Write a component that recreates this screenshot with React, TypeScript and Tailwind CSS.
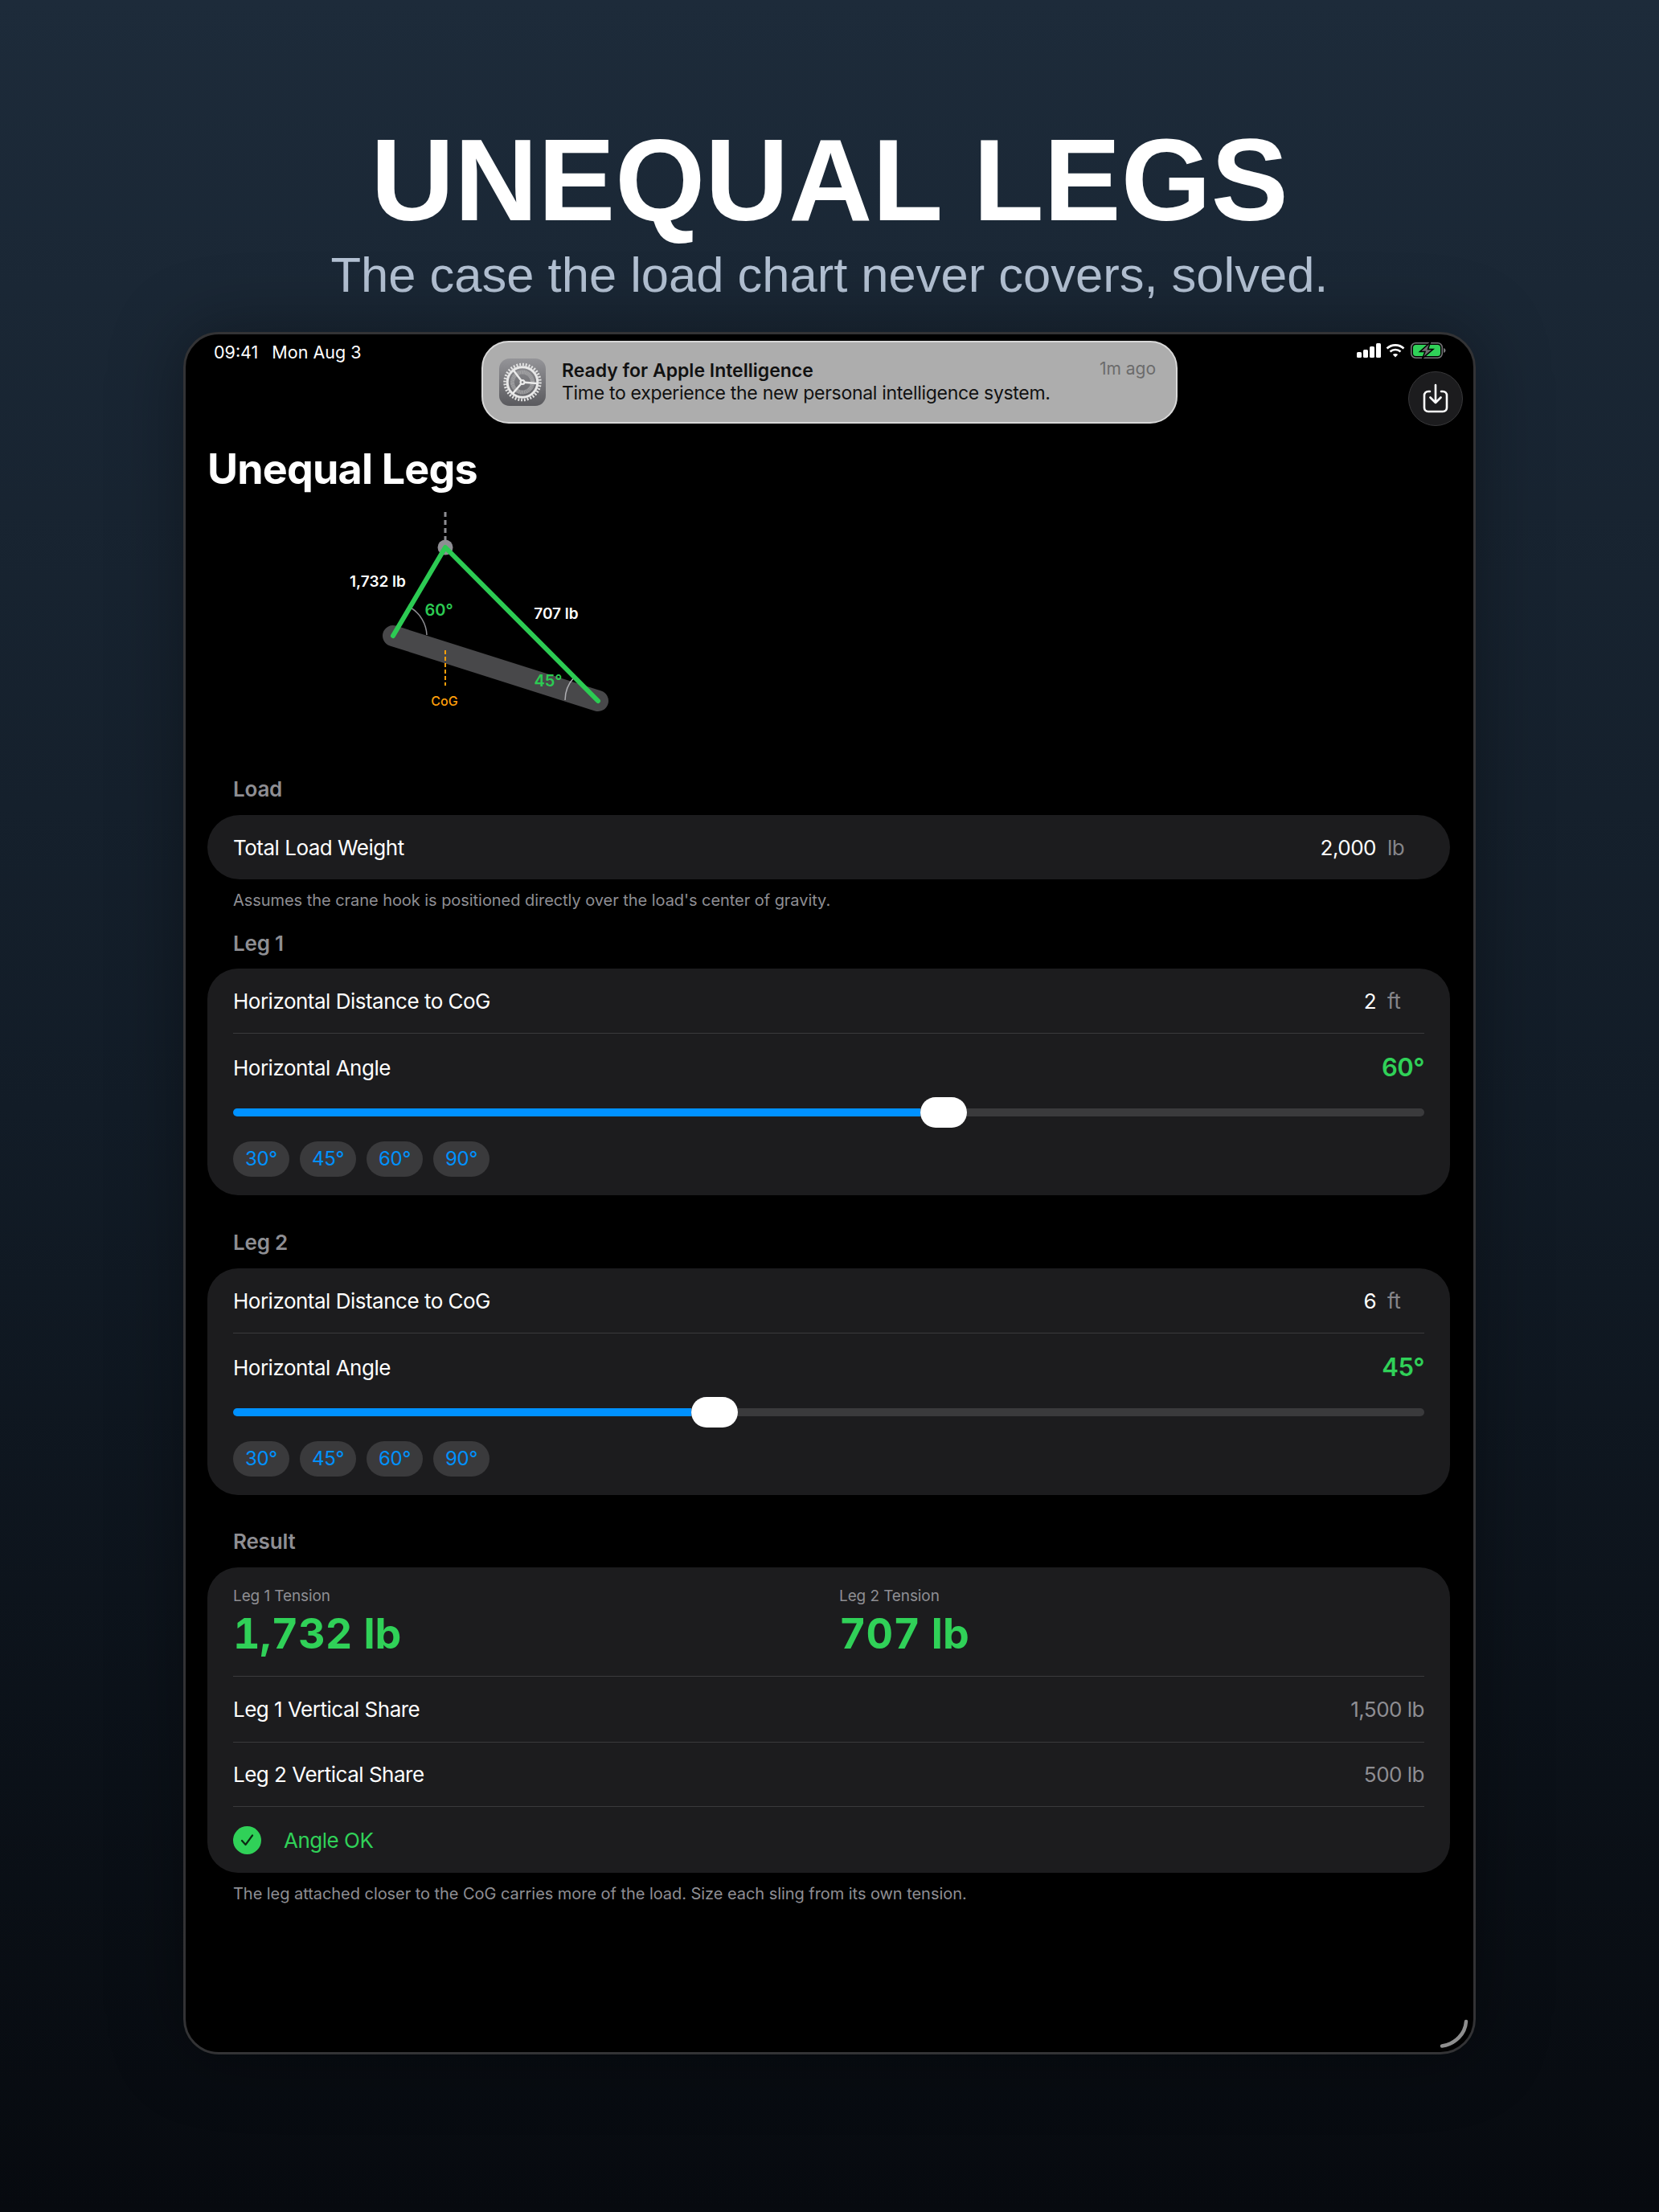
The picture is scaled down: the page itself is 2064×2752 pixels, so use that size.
const FONT = "font-['Inter',sans-serif]";

function SectionLabel({ children, className }: { children: string; className: string }) {
  return (
    <div className={`h-[34px] pl-[32px] text-[26px] leading-[36px] font-semibold tracking-[-0.2px] text-[#8e8e93] ${className}`}>
      {children}
    </div>
  );
}

function InputRow({ label, value, unit }: { label: string; value: string; unit: string }) {
  return (
    <div className="flex h-[80px] items-center text-[26px] tracking-[-0.5px] text-white">
      <span className="flex-1">{label}</span>
      <span>{value}</span>
      <span className="ml-[14px] w-[46px] text-[#858589]">{unit}</span>
    </div>
  );
}

function AngleChips() {
  return (
    <div className="mt-[17px] flex gap-[13px]">
      {["30°", "45°", "60°", "90°"].map((a) => (
        <div
          key={a}
          className="flex h-[44px] w-[70px] items-center justify-center rounded-[22px] bg-[#3a3a3c] text-[24px] tracking-[-0.3px] text-[#0091ff]"
        >
          {a}
        </div>
      ))}
    </div>
  );
}

function LegCard({ distance, angle, fill }: { distance: string; angle: string; fill: string }) {
  return (
    <div className="h-[282px] rounded-[38px] bg-[#1c1c1e] px-[32px]">
      <div className="border-b border-[#3a3a3c]">
        <InputRow label="Horizontal Distance to CoG" value={distance} unit="ft" />
      </div>
      <div className="mt-[22px] flex h-[40px] items-center justify-between text-[26px] tracking-[-0.5px] text-white">
        <span>Horizontal Angle</span>
        <span className="text-[31px] font-semibold text-[#30d158]">{angle}</span>
      </div>
      <div className="mt-[17px] flex h-[38px] items-center">
        <div className={`h-[10px] rounded-l-full bg-[#0091ff] ${fill}`} />
        <div className="h-[38px] w-[58px] rounded-[19px] bg-white" />
        <div className="h-[10px] flex-1 rounded-r-full bg-[#3a3a3c]" />
      </div>
      <AngleChips />
    </div>
  );
}

function ShareRow({ label, value, height }: { label: string; value: string; height: string }) {
  return (
    <div className={`flex items-center justify-between border-b border-[#3a3a3c] text-[26px] tracking-[-0.5px] text-white ${height}`}>
      <span>{label}</span>
      <span className="text-[#8e8e93]">{value}</span>
    </div>
  );
}

function Tension({ label, value, className }: { label: string; value: string; className: string }) {
  return (
    <div className={className}>
      <div className="text-[19px] leading-[24px] tracking-[-0.1px] text-[#8e8e93]">{label}</div>
      <div className="mt-[2px] text-[52px] leading-[66px] font-bold text-[#30d158] tabular-nums">{value}</div>
    </div>
  );
}

function SettingsIcon() {
  return (
    <svg width="58" height="59" viewBox="0 0 58 59" className="shrink-0">
      <defs>
        <linearGradient id="gearBg" x1="0" y1="0" x2="0" y2="1">
          <stop offset="0" stopColor="#949498" />
          <stop offset="1" stopColor="#5a5a5e" />
        </linearGradient>
      </defs>
      <rect width="58" height="59" rx="13" fill="url(#gearBg)" />
      <circle cx="29" cy="29.5" r="22" fill="none" stroke="#e4e4e4" strokeWidth="3.500" pathLength="72" strokeDasharray="1 1" />
      <circle cx="29" cy="29.5" r="18.800" fill="none" stroke="#e8e8e8" strokeWidth="3" />
      <circle cx="29" cy="29.5" r="12.500" fill="none" stroke="#a2a2a4" strokeWidth="5" pathLength="96" strokeDasharray="1.500 0.500" />
      <path d="M29 29.500L47 31M29 29.500L18 15M29 29.500L17 43.500" stroke="#ececec" strokeWidth="2.500" fill="none" />
      <circle cx="29" cy="29.5" r="3.500" fill="#ececec" />
      <circle cx="29" cy="29.5" r="1.300" fill="#77777b" />
    </svg>
  );
}

function StatusIcons() {
  return (
    <div className="flex items-center">
      <svg width="30" height="18" viewBox="0 0 30 18" fill="#fff">
        <rect x="0" y="11" width="6" height="7" rx="1.5" />
        <rect x="8" y="8" width="6" height="10" rx="1.5" />
        <rect x="16" y="4" width="6" height="14" rx="1.5" />
        <rect x="24" y="0" width="6" height="18" rx="1.5" />
      </svg>
      <svg width="24" height="18" viewBox="0 0 24 18" fill="none" stroke="#fff" strokeWidth="2.6" className="ml-[6px]">
        <path d="M1.5 6.5C7.5 1 16.5 1 22.5 6.5" />
        <path d="M5.5 10.5C9.2 7.2 14.8 7.2 18.5 10.5" />
        <path d="M12 17.5L8.8 14C10.6 12.6 13.4 12.6 15.2 14Z" fill="#fff" stroke="none" />
      </svg>
      <svg width="44" height="20" viewBox="0 0 44 20" className="ml-[7px]">
        <rect x="0.75" y="0.75" width="38.5" height="18.5" rx="5.5" fill="none" stroke="#77777a" strokeWidth="1.5" />
        <rect x="3" y="3" width="34" height="14" rx="3.5" fill="#30d158" />
        <path d="M41 7C42.5 7.5 43.5 8.6 43.5 10C43.5 11.4 42.5 12.5 41 13Z" fill="#77777a" />
        <path d="M24.500 0L11.500 11.500H18L14.500 20L28 8.500H21.500Z" fill="#6e6e70" stroke="#000" strokeWidth="1.500" />
      </svg>
    </div>
  );
}

function SlingDiagram() {
  return (
    <svg width="600" height="340" viewBox="258 623 600 340" className="block">
      <line x1="554" y1="636" x2="554" y2="680" stroke="#8e8e93" strokeWidth="3" strokeDasharray="6 4" />
      <line x1="489" y1="790" x2="744" y2="871" stroke="#48484a" strokeWidth="26" strokeLinecap="round" />
      <circle cx="554" cy="680" r="9.5" fill="#8e8e93" />
      <line x1="554" y1="808" x2="554" y2="852" stroke="#ff9f0a" strokeWidth="2" strokeDasharray="5 3" />
      <path d="M511 755A42 42 0 0 1 531 789" fill="none" stroke="#8e8e93" strokeWidth="1.5" />
      <path d="M714 842A42 42 0 0 0 703 870" fill="none" stroke="#aeaeb2" strokeWidth="1.5" />
      <path d="M489 790L554 680L744 871" fill="none" stroke="#2ccb53" strokeWidth="6" strokeLinecap="round" strokeLinejoin="round" />
      <text x="553" y="877" textAnchor="middle" fontSize="16" fontWeight="500" fill="#ff9f0a">CoG</text>
      <text x="470" y="729" textAnchor="middle" fontSize="19" fontWeight="600" fill="#fff">1,732 lb</text>
      <text x="692" y="769" textAnchor="middle" fontSize="19" fontWeight="600" fill="#fff">707 lb</text>
      <text x="546" y="765" textAnchor="middle" fontSize="20" fontWeight="600" fill="#2ccb53">60°</text>
      <text x="682" y="853" textAnchor="middle" fontSize="20" fontWeight="600" fill="#2ccb53">45°</text>
    </svg>
  );
}

export default function App() {
  return (
    <div className="flex h-[2752px] w-[2064px] flex-col items-center bg-gradient-to-b from-[#1d2b3a] via-[#121c27] to-[#070a0f]">
      {/* Headline */}
      <h1 className="mt-[152px] font-['Liberation_Sans',sans-serif] text-[144px] leading-[146px] font-bold text-white">
        UNEQUAL LEGS
      </h1>
      <p className="mt-[7px] font-['Liberation_Sans',sans-serif] text-[61.500px] leading-[74px] text-[#b3c1d3]">
        The case the load chart never covers, solved.
      </p>

      {/* iPad frame */}
      <div
        className={`relative mt-[34px] h-[2143px] w-[1608px] rounded-[44px] border-[3px] border-[#333335] bg-black pl-[27px] shadow-[0_0_90px_rgba(0,0,0,0.35)] ${FONT}`}
      >
        <div className="flex h-[128px] w-[1546px] items-start justify-between">
          <div className="mt-[8px] ml-[8px] flex gap-[17px] text-[21.500px] leading-[28px] text-white">
            <span>09:41</span>
            <span>Mon Aug 3</span>
          </div>
          <div className="mt-[10px] mr-[5px]">
            <StatusIcons />
          </div>
        </div>

        {/* Notification banner */}
        <div className="absolute top-[8px] left-[368px] flex h-[103px] w-[866px] items-start rounded-[34px] border-2 border-[#d8d8d8] bg-[#adadad] pt-[20px] pr-[25px] pl-[20px]">
          <SettingsIcon />
          <div className="mt-[1px] ml-[20px] flex-1 text-[23px] leading-[28px] text-[#111]">
            <div className="font-semibold">Ready for Apple Intelligence</div>
            <div className="tracking-[-0.3px]">Time to experience the new personal intelligence system.</div>
          </div>
          <span className="-mt-[1px] text-[21px] leading-[28px] text-[#6b6b6b]">1m ago</span>
        </div>

        {/* Export button */}
        <button className="absolute top-[46px] left-[1521px] flex h-[68px] w-[68px] items-center justify-center rounded-full border border-[#38383a] bg-[#1c1c1e]">
          <svg width="32" height="38" viewBox="0 0 32 38" fill="none" stroke="#fff" strokeWidth="2.6" strokeLinecap="round" strokeLinejoin="round">
            <path d="M9 10H7C4 10 2 12 2 15V30C2 33 4 35 7 35H25C28 35 30 33 30 30V15C30 12 28 10 25 10H23" />
            <path d="M16 2V24M9.5 17.5L16 24L22.500 17.5" />
          </svg>
        </button>

        {/* Resize grip */}
        <svg width="36" height="36" viewBox="0 0 36 36" className="absolute right-[6px] bottom-[5px]">
          <path d="M33 3C32 18 20 31 3 33.500" fill="none" stroke="#8e8e8e" strokeWidth="4.500" strokeLinecap="round" />
        </svg>

        <div className="w-[1546px]">
          <h2 className="h-[80px] text-[52px] leading-[80px] font-bold tracking-[-0.8px] text-white">Unequal Legs</h2>
          <SlingDiagram />

          <SectionLabel className="mb-[16px]">Load</SectionLabel>
          <div className="rounded-[40px] bg-[#1c1c1e] px-[32px]">
            <InputRow label="Total Load Weight" value="2,000" unit="lb" />
          </div>
          <p className="mt-[12px] h-[28px] pl-[32px] text-[20px] leading-[28px] tracking-[-0.05px] text-[#8e8e93]">
            Assumes the crane hook is positioned directly over the load's center of gravity.
          </p>

          <SectionLabel className="mt-[22px] mb-[15px]">Leg 1</SectionLabel>
          <LegCard distance="2" angle="60°" fill="w-[855px]" />

          <SectionLabel className="mt-[41px] mb-[16px]">Leg 2</SectionLabel>
          <LegCard distance="6" angle="45°" fill="w-[570px]" />

          <SectionLabel className="mt-[40px] mb-[16px]">Result</SectionLabel>
          <div className="h-[380px] rounded-[38px] bg-[#1c1c1e] px-[32px]">
            <div className="flex h-[136px] items-start border-b border-[#3a3a3c] pt-[24px]">
              <Tension label="Leg 1 Tension" value="1,732 lb" className="w-[754px]" />
              <Tension label="Leg 2 Tension" value="707 lb" className="flex-1" />
            </div>
            <ShareRow label="Leg 1 Vertical Share" value="1,500 lb" height="h-[82px]" />
            <ShareRow label="Leg 2 Vertical Share" value="500 lb" height="h-[80px]" />
            <div className="flex h-[82px] items-center text-[26px] tracking-[-0.5px] text-[#30d158]">
              <svg width="35" height="35" viewBox="0 0 35 35" className="shrink-0">
                <circle cx="17.500" cy="17.500" r="17.500" fill="#30d158" />
                <path d="M11 18L15.500 23L24 11.500" fill="none" stroke="#0b2a14" strokeWidth="2.200" strokeLinecap="round" strokeLinejoin="round" />
              </svg>
              <span className="ml-[28px]">Angle OK</span>
            </div>
          </div>
          <p className="mt-[12px] h-[28px] pl-[32px] text-[20px] leading-[28px] tracking-[-0.05px] text-[#8e8e93]">
            The leg attached closer to the CoG carries more of the load. Size each sling from its own tension.
          </p>
        </div>
      </div>
    </div>
  );
}
